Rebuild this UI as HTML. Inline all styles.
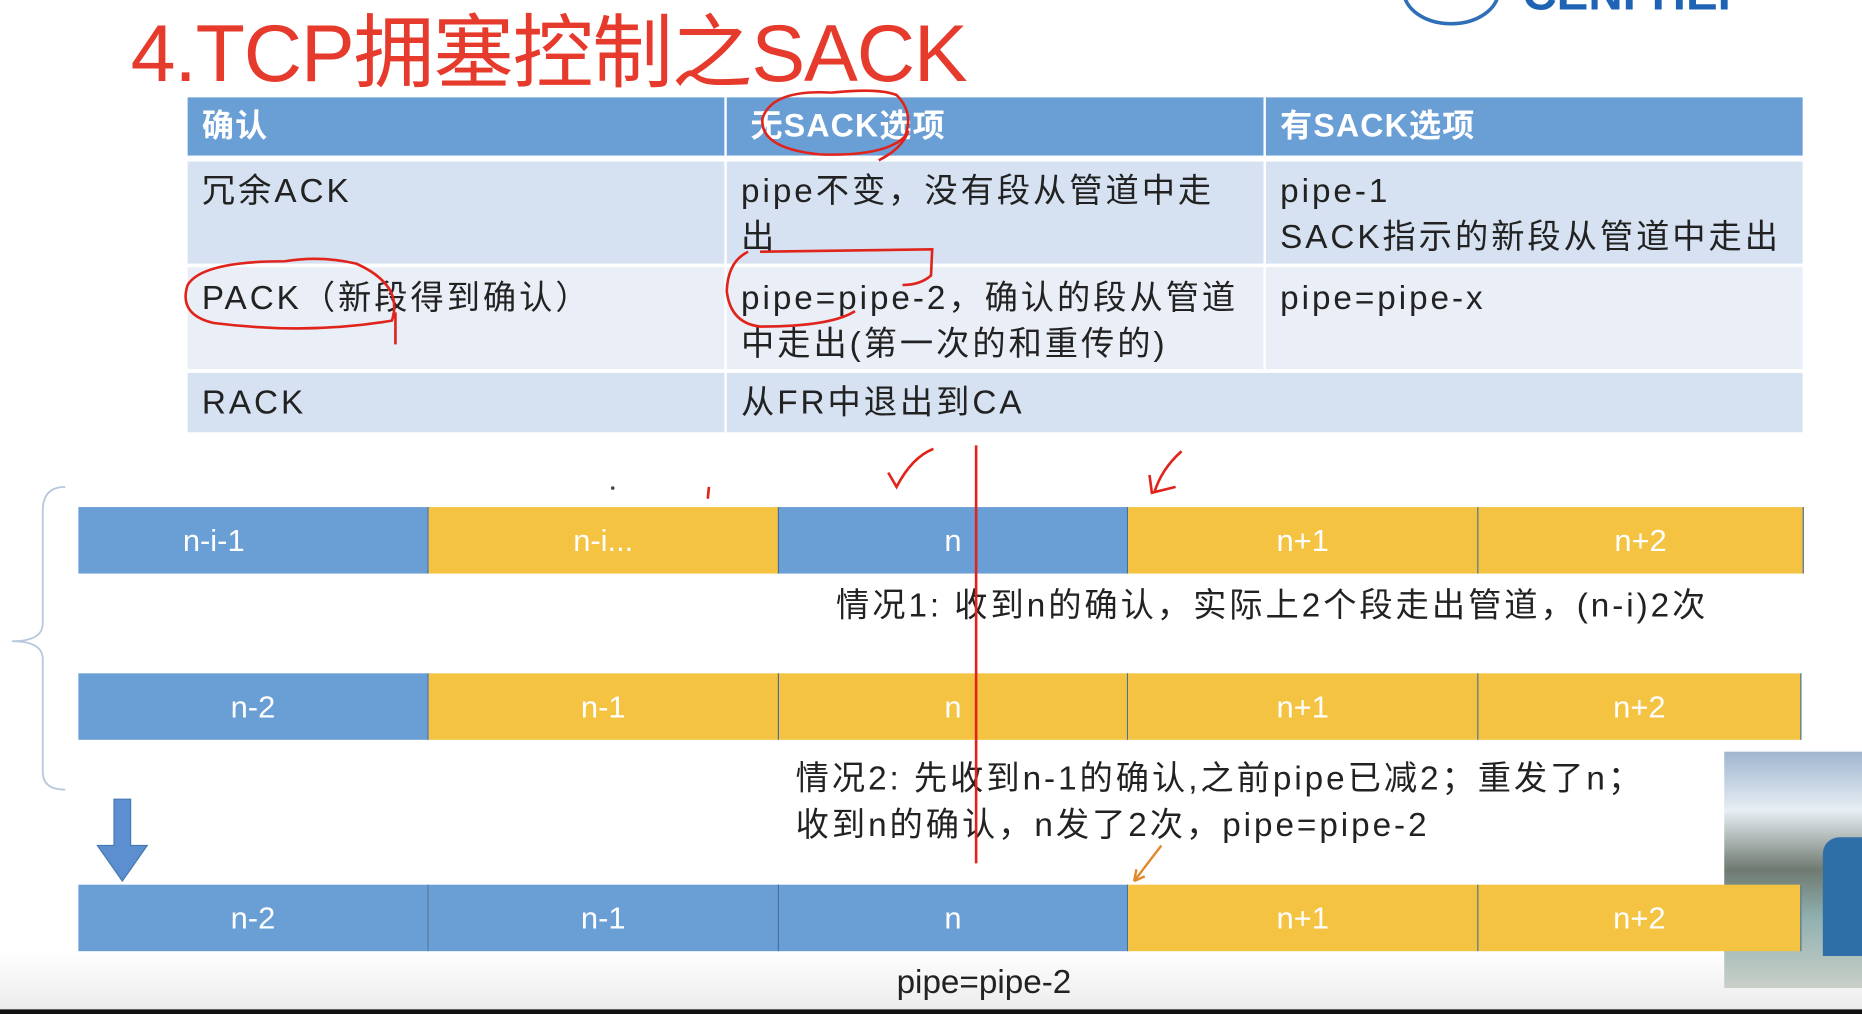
<!DOCTYPE html>
<html><head><meta charset="utf-8"><style>
html,body{margin:0;padding:0;width:1862px;height:1014px;overflow:hidden;background:#fff}
#w{position:absolute;left:0;top:0;width:1568px;height:854px;transform:scale(1.1875);transform-origin:0 0;font-family:"Liberation Sans","Noto Sans CJK SC",sans-serif;background:#fff}
.a{position:absolute}
.t{position:absolute;font-size:28px;letter-spacing:2.5px;color:#222;line-height:39px;white-space:nowrap}
.h{position:absolute;font-size:27px;color:#fff;font-weight:bold;line-height:49px;letter-spacing:1px}
.c{position:absolute;height:56px;line-height:56px;text-align:center;color:#fff;font-size:26px;box-sizing:border-box;border-right:1px solid #4a6f9a}
.b{background:#6a9fd6}.y{background:#f4c342}
</style></head><body><div id="w">
<div class="a" style="left:0;top:800px;width:1568px;height:50px;background:linear-gradient(#fff,#ececec)"></div>
<div class="a" style="left:0;top:850px;width:1568px;height:4px;background:#111"></div>
<div class="a" style="left:1452px;top:633px;width:116px;height:199px;background:linear-gradient(#9fb6cf 0%,#e8eef4 25%,#6f7a70 50%,#8fb0b0 70%,#c9cfc8 100%)"></div>
<div class="a" style="left:1535px;top:705px;width:33px;height:100px;background:#2f6fa8;border-radius:14px 0 0 0"></div>
<div class="a" style="left:110px;top:0px;font-size:68px;color:#e63a2c;line-height:90px;letter-spacing:-1px">4.TCP拥塞控制之SACK</div>
<svg class="a" style="left:1170px;top:0" width="398" height="30"><ellipse cx="52" cy="-8" rx="40" ry="28" fill="none" stroke="#2f6fb7" stroke-width="3"/><text x="112" y="8" font-family="Liberation Sans" font-weight="bold" font-size="40" fill="#1f64b4">CENI-HEF</text></svg>
<div class="a b" style="left:158px;top:82px;width:1360px;height:49px"></div>
<div class="a" style="left:158px;top:136px;width:1360px;height:86px;background:#d6e2f1"></div>
<div class="a" style="left:158px;top:225px;width:1360px;height:86px;background:#e9eef7"></div>
<div class="a" style="left:158px;top:314px;width:1360px;height:50px;background:#d6e2f1"></div>
<div class="a" style="left:610px;top:82px;width:2px;height:282px;background:#fff"></div>
<div class="a" style="left:1064px;top:82px;width:2px;height:229px;background:#fff"></div>
<div class="h" style="left:170px;top:82px">确认</div>
<div class="h" style="left:632px;top:82px">无SACK选项</div>
<div class="h" style="left:1078px;top:82px">有SACK选项</div>
<div class="t" style="left:170px;top:141px">冗余ACK</div>
<div class="t" style="left:624px;top:141px">pipe不变，没有段从管道中走<br>出</div>
<div class="t" style="left:1078px;top:141px">pipe-1<br>SACK指示的新段从管道中走出</div>
<div class="t" style="left:170px;top:231px">PACK（新段得到确认）</div>
<div class="t" style="left:624px;top:231px">pipe=pipe-2，确认的段从管道<br>中走出(第一次的和重传的)</div>
<div class="t" style="left:1078px;top:231px">pipe=pipe-x</div>
<div class="t" style="left:170px;top:319px">RACK</div>
<div class="t" style="left:624px;top:319px">从FR中退出到CA</div>
<div class="a" style="left:66px;top:427px">
<div class="c b" style="left:0;width:295px;padding-right:66px">n-i-1</div><div class="c y" style="left:295px;width:295px">n-i...</div><div class="c b" style="left:590px;width:294px">n</div><div class="c y" style="left:884px;width:295px">n+1</div><div class="c y" style="left:1179px;width:274px">n+2</div></div>
<div class="a" style="left:66px;top:567px">
<div class="c b" style="left:0;width:295px">n-2</div><div class="c y" style="left:295px;width:295px">n-1</div><div class="c y" style="left:590px;width:294px">n</div><div class="c y" style="left:884px;width:295px">n+1</div><div class="c y" style="left:1179px;width:272px">n+2</div></div>
<div class="a" style="left:66px;top:745px">
<div class="c b" style="left:0;width:295px">n-2</div><div class="c b" style="left:295px;width:295px">n-1</div><div class="c b" style="left:590px;width:294px">n</div><div class="c y" style="left:884px;width:295px">n+1</div><div class="c y" style="left:1179px;width:272px">n+2</div></div>
<div class="t" style="left:704px;top:490px">情况1: 收到n的确认，实际上2个段走出管道，(n-i)2次</div>
<div class="t" style="left:670px;top:636px">情况2: 先收到n-1的确认,之前pipe已减2；重发了n；<br>收到n的确认，n发了2次，pipe=pipe-2</div>
<div class="t" style="left:755px;top:807px;letter-spacing:0">pipe=pipe-2</div>
<svg class="a" style="left:0;top:0" width="1568" height="854">
<path d="M55 410 Q36 410 36 430 L36 525 Q36 540 10 540 Q36 540 36 555 L36 650 Q36 665 55 665" fill="none" stroke="#b8c8dc" stroke-width="1.5"/>
<path d="M96 673 H110 V712 H124 L103 742 L82 712 H96 Z" fill="#5b8fcf" stroke="#4a78b0"/>
<g fill="none" stroke="#e0231b" stroke-width="2.2">
<line x1="822" y1="375" x2="822" y2="727"/>
<path d="M748 398 L755 410 Q768 385 786 378"/>
<path d="M995 380 Q978 395 972 415 M968 400 L970 415 L990 410"/>
<path d="M597 410 L596 420"/>
<path d="M700 78 Q650 75 642 100 Q640 125 690 130 Q745 132 762 115 Q770 95 755 80 Q740 74 700 78 M765 110 Q760 125 740 135"/>
<path d="M240 220 Q170 220 158 240 Q150 265 180 272 Q260 282 330 270 Q340 240 300 222 Q270 215 240 220 M333 263 L333 290"/>
<path d="M630 212 Q613 220 612 245 Q615 272 640 275 Q700 275 720 262 M640 212 L785 210 L784 232 Q775 240 760 240"/>
</g>
<circle cx="516" cy="411" r="1.5" fill="#444"/>
<path d="M978 712 L955 742 M955 742 L957 732 M955 742 L964 738" stroke="#e0892a" stroke-width="2" fill="none"/>
</svg>
</div></body></html>
